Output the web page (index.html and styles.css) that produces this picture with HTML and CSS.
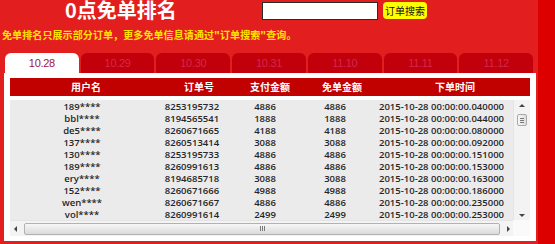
FILE: index.html
```html
<!DOCTYPE html>
<html>
<head>
<meta charset="utf-8">
<link rel="stylesheet" href="styles.css">
</head>
<body>
<div class="page">
  <div class="main">
    <div class="top">
      <div class="title">0点免单排名</div>
      <div class="search-input"></div>
      <div class="search-btn">订单搜索</div>
    </div>
    <div class="notice">免单排名只展示部分订单，更多免单信息请通过"订单搜索"查询。</div>
    <div class="tabs">
      <div class="tab active">10.28</div>
      <div class="tab">10.29</div>
      <div class="tab">10.30</div>
      <div class="tab">10.31</div>
      <div class="tab">11.10</div>
      <div class="tab">11.11</div>
      <div class="tab">11.12</div>
    </div>
    <div class="panel">
      <div class="thead">
        <div>用户名</div><div>订单号</div><div>支付金额</div><div>免单金额</div><div>下单时间</div>
      </div>
      <div class="tbody">
        <div class="rows">
          <div class="row"><div>189****</div><div>8253195732</div><div>4886</div><div>4886</div><div>2015-10-28 00:00:00.040000</div></div>
          <div class="row"><div>bbl****</div><div>8194565541</div><div>1888</div><div>1888</div><div>2015-10-28 00:00:00.044000</div></div>
          <div class="row"><div>de5****</div><div>8260671665</div><div>4188</div><div>4188</div><div>2015-10-28 00:00:00.080000</div></div>
          <div class="row"><div>137****</div><div>8260513414</div><div>3088</div><div>3088</div><div>2015-10-28 00:00:00.092000</div></div>
          <div class="row"><div>130****</div><div>8253195733</div><div>4886</div><div>4886</div><div>2015-10-28 00:00:00.151000</div></div>
          <div class="row"><div>189****</div><div>8260991613</div><div>4886</div><div>4886</div><div>2015-10-28 00:00:00.153000</div></div>
          <div class="row"><div>ery****</div><div>8194685718</div><div>3088</div><div>3088</div><div>2015-10-28 00:00:00.163000</div></div>
          <div class="row"><div>152****</div><div>8260671666</div><div>4988</div><div>4988</div><div>2015-10-28 00:00:00.186000</div></div>
          <div class="row"><div>wen****</div><div>8260671667</div><div>4886</div><div>4886</div><div>2015-10-28 00:00:00.235000</div></div>
          <div class="row"><div>vol****</div><div>8260991614</div><div>2499</div><div>2499</div><div>2015-10-28 00:00:00.253000</div></div>
          <div class="row"><div>bbl****</div><div>8194565542</div><div>1888</div><div>1888</div><div>2015-10-28 00:00:00.261000</div></div>
        </div>
        <div class="vscroll">
          <span class="arrow up"></span>
          <span class="vthumb"><i></i><i></i><i></i></span>
          <span class="vspace"></span>
          <span class="arrow down"></span>
        </div>
        <div class="hscroll">
          <span class="arrow left"></span>
          <span class="hthumb"><span class="grip"><i></i><i></i><i></i></span></span>
          <span class="arrow right"></span>
        </div>
        <div class="corner"></div>
      </div>
    </div>
  </div>
  <div class="strip"></div>
</div>
</body>
</html>
```

FILE: styles.css
```css
html, body {
  margin: 0;
  padding: 0;
}
body {
  width: 555px;
  height: 244px;
  overflow: hidden;
  background: #e31e1e;
}
.page {
  display: flex;
  width: 555px;
  height: 244px;
}
.main {
  width: 538px;
  background: #e31e1e;
}
.strip {
  flex: 1;
  background: #dc0000;
}
.top {
  display: flex;
  align-items: flex-start;
  height: 22px;
}
.title {
  margin-left: 65px;
  width: 197px;
  color: #fff;
  font: 700 20px/20px "Noto Sans CJK SC", sans-serif;
  white-space: nowrap;
}
.search-input {
  margin-top: 2px;
  width: 116px;
  height: 18px;
  box-sizing: border-box;
  border: 1px solid #2a2a2a;
  background: #fff;
}
.search-btn {
  margin: 2px 0 0 5px;
  width: 44px;
  height: 17px;
  border-radius: 4px;
  background: #ffff00;
  color: #111;
  font: 400 10px/17px "Noto Sans CJK SC", sans-serif;
  text-align: center;
}
.notice {
  margin-top: 7px;
  margin-left: 2px;
  color: #ffe400;
  font: 700 10px/12px "Noto Sans CJK SC", sans-serif;
  letter-spacing: 0.1px;
  white-space: nowrap;
}
.tabs {
  display: flex;
  gap: 2px;
  width: 528px;
  margin: 12px 0 0 5px;
  height: 20px;
}
.tab {
  flex: 1;
  border-radius: 6px 6px 0 0;
  background: #c2000c;
  color: #d2284f;
  font: 400 11px/20px "Liberation Sans", Arial, sans-serif;
  letter-spacing: -0.3px;
  text-align: center;
}
.tab.active {
  background: #fff;
  color: #a3143d;
}
.panel {
  margin: 0 2px 0 4px;
  padding: 5px 6px;
  background: #fff;
}
.thead {
  display: grid;
  grid-template-columns: 152px 74px 68px 76px 1fr;
  height: 18px;
  background: #c10000;
  color: #fff;
  font: 700 10px/18px "Noto Sans CJK SC", sans-serif;
  text-align: center;
}
.tbody {
  margin-top: 4px;
  display: grid;
  grid-template-columns: 503px 17px;
  grid-template-rows: 120px 16px;
  background: #ebebeb;
}
.rows {
  overflow: hidden;
  padding-top: 1px;
  box-sizing: border-box;
}
.row {
  display: grid;
  grid-template-columns: 144px 76px 70px 70px 1fr;
  height: 12px;
  font: 600 9.5px/12px "Open Sans", "Noto Sans", sans-serif;
  color: #262626;
  text-align: center;
  white-space: nowrap;
}
.vscroll {
  display: flex;
  flex-direction: column;
  align-items: center;
  background: #f3f3f3;
  border-left: 1px solid #e4e4e4;
  padding: 4px 0 3px;
}
.vthumb {
  margin-top: 7px;
  width: 8px;
  height: 10px;
  border: 1px solid #a9a9a9;
  border-radius: 2px;
  background: linear-gradient(90deg, #f8f8f8, #dedede);
  display: flex;
  flex-direction: column;
  justify-content: center;
  align-items: center;
  gap: 1px;
}
.vthumb i {
  display: block;
  width: 4px;
  height: 1px;
  background: #777;
}
.vspace {
  flex: 1;
}
.arrow {
  display: block;
  width: 0;
  height: 0;
  border: 3px solid transparent;
}
.arrow.up {
  border-bottom: 3px solid #444;
  border-top-width: 0;
}
.arrow.down {
  border-top: 3px solid #444;
  border-bottom-width: 0;
}
.arrow.left {
  border-right: 3px solid #444;
  border-left-width: 0;
}
.arrow.right {
  border-left: 3px solid #444;
  border-right-width: 0;
}
.hscroll {
  display: flex;
  align-items: center;
  background: #f3f3f3;
  border-top: 1px solid #e4e4e4;
  padding: 0 3px 0 4px;
  gap: 7px;
}
.hthumb {
  flex: 1;
  height: 12px;
  border: 1px solid #b2b2b2;
  border-radius: 2px;
  background: linear-gradient(180deg, #f7f7f7, #dadada);
  display: flex;
  justify-content: center;
  align-items: center;
  box-sizing: border-box;
}
.grip {
  display: flex;
  gap: 1px;
}
.grip i {
  display: block;
  width: 1px;
  height: 5px;
  background: #7a7a7a;
}
.corner {
  background: #fafafa;
}
```
